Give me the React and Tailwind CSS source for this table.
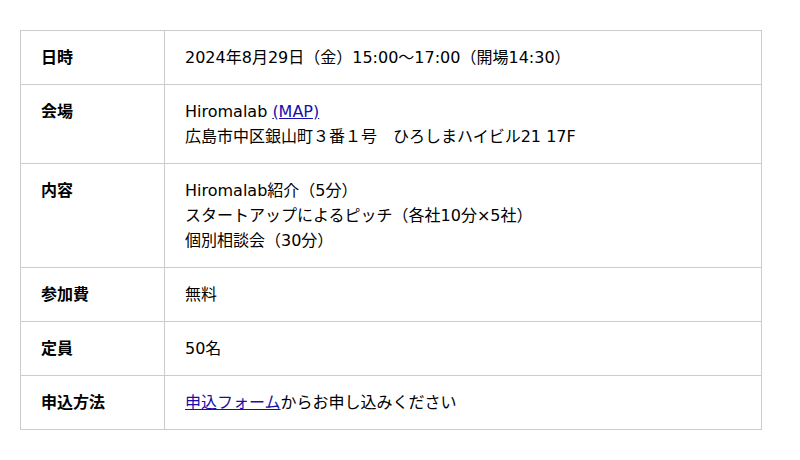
import React from 'react';

const rows = [
    { label: '日時', lines: ['2024年8月29日（金）15:00〜17:00（開場14:30）'] },
    {
        label: '会場',
        lines: [
            <>Hiromalab <a href="#" className="text-[#1a0dab] underline">(MAP)</a></>,
            '広島市中区銀山町３番１号　ひろしまハイビル21 17F',
        ],
    },
    {
        label: '内容',
        lines: ['Hiromalab紹介（5分）', 'スタートアップによるピッチ（各社10分×5社）', '個別相談会（30分）'],
    },
    { label: '参加費', lines: ['無料'] },
    { label: '定員', lines: ['50名'] },
    {
        label: '申込方法',
        lines: [<><a href="#" className="text-[#1a0dab] underline">申込フォーム</a>からお申し込みください</>],
    },
];

const App = () => {
    return (
        <div className="min-h-[460px] bg-white px-5 pt-[30px] font-['DejaVu_Sans','Noto_Sans_CJK_JP',sans-serif] text-[16px] leading-[25px] text-black">
            <table className="w-[742px] border-collapse">
                <tbody>
                    {rows.map((row) => (
                        <tr key={row.label}>
                            <th className="w-[144px] border border-[#cccccc] px-5 py-[14px] text-left align-top font-bold">
                                {row.label}
                            </th>
                            <td className="border border-[#cccccc] px-5 py-[14px] align-top">
                                {row.lines.map((line, i) => (
                                    <div key={i}>{line}</div>
                                ))}
                            </td>
                        </tr>
                    ))}
                </tbody>
            </table>
        </div>
    );
};

export default App;
